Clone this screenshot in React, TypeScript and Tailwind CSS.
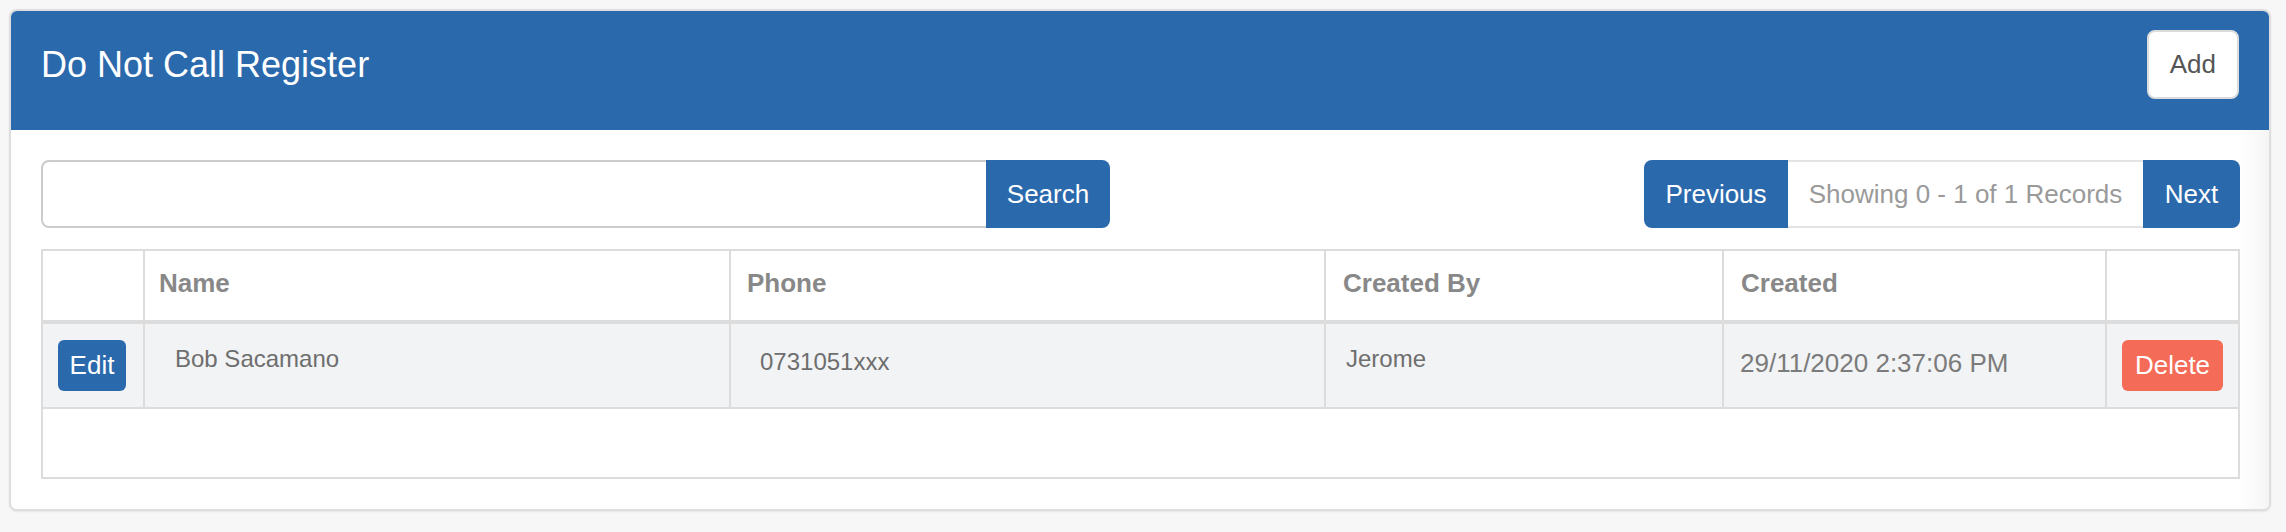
import React from "react";

const font = { fontFamily: '"Liberation Sans", Arial, Helvetica, sans-serif' };

export default function App() {
  return (
    <div
      className="min-h-screen bg-[#f7f7f7] pt-[9px] pl-[9px] pr-[15px] pb-[20px]"
      style={font}
    >
      <div className="overflow-hidden rounded-[8px] border-2 border-[#dedede] bg-white shadow-[0_1px_2px_rgba(0,0,0,0.08)]">
        {/* Header */}
        <div className="flex h-[119px] items-center justify-between bg-[#2b69ad] pb-[12px] pl-[30px] pr-[30px]">
          <h3 className="text-[36px] leading-none text-white">Do Not Call Register</h3>
          <button className="h-[69px] rounded-[8px] border-2 border-[#dcdcdc] bg-white px-[21px] text-[26px] text-[#555]">
            Add
          </button>
        </div>

        {/* Body */}
        <div className="bg-[linear-gradient(to_left,#f5f5f5,#ffffff_30px)] pb-[30px] pl-[30px] pr-[29px] pt-[30px]">
          {/* Toolbar */}
          <div className="flex items-center justify-between">
            <div className="flex h-[68px]">
              <input
                className="h-full w-[945px] rounded-l-[8px] border-2 border-r-0 border-[#cccccc] bg-white px-3 text-[26px] outline-none"
                type="text"
              />
              <button className="h-full w-[124px] rounded-r-[8px] bg-[#2b69ad] text-[26px] text-white">
                Search
              </button>
            </div>
            <div className="flex h-[68px]">
              <button className="h-full w-[144px] rounded-l-[8px] bg-[#2b69ad] text-[26px] text-white">
                Previous
              </button>
              <div className="flex h-full w-[355px] items-center justify-center border-y-2 border-[#e3e3e3] bg-white text-[26px] text-[#9a9a9a]">
                Showing 0 - 1 of 1 Records
              </div>
              <button className="h-full w-[97px] rounded-r-[8px] bg-[#2b69ad] text-[26px] text-white">
                Next
              </button>
            </div>
          </div>

          {/* Table */}
          <div className="mt-[21px] border-2 border-[#dcdcdc]">
            <div className="grid h-[73px] grid-cols-[100px_586px_595px_398px_383px_1fr] border-b-4 border-[#dcdcdc] text-[26px] font-bold text-[#888]">
              <div />
              <div className="flex items-center border-l-2 border-[#dcdcdc] pb-[5px] pl-[14px]">Name</div>
              <div className="flex items-center border-l-2 border-[#dcdcdc] pb-[5px] pl-[16px]">Phone</div>
              <div className="flex items-center border-l-2 border-[#dcdcdc] pb-[5px] pl-[17px]">Created By</div>
              <div className="flex items-center border-l-2 border-[#dcdcdc] pb-[5px] pl-[17px]">Created</div>
              <div className="border-l-2 border-[#dcdcdc]" />
            </div>
            <div className="grid h-[85px] grid-cols-[100px_586px_595px_398px_383px_1fr] border-b-2 border-[#dcdcdc] bg-[#f2f3f5] text-[24px] text-[#6e6e6e]">
              <div className="flex items-center justify-center pr-[2px]">
                <button className="h-[51px] rounded-[6px] bg-[#2b69ad] px-[12px] text-[26px] text-white">
                  Edit
                </button>
              </div>
              <div className="flex items-center border-l-2 border-[#dcdcdc] pb-[13px] pl-[30px]">Bob Sacamano</div>
              <div className="flex items-center border-l-2 border-[#dcdcdc] pb-[8px] pl-[29px]">0731051xxx</div>
              <div className="flex items-center border-l-2 border-[#dcdcdc] pb-[13px] pl-[20px]">Jerome</div>
              <div className="flex items-center border-l-2 border-[#dcdcdc] pb-[5px] pl-[16px] text-[26px] text-[#7b7b7b]">
                29/11/2020 2:37:06 PM
              </div>
              <div className="flex items-center justify-center border-l-2 border-[#dcdcdc]">
                <button className="h-[51px] rounded-[6px] bg-[#f46b57] px-[13px] text-[26px] text-white">
                  Delete
                </button>
              </div>
            </div>
            <div className="h-[68px] bg-white" />
          </div>
        </div>
      </div>
    </div>
  );
}
